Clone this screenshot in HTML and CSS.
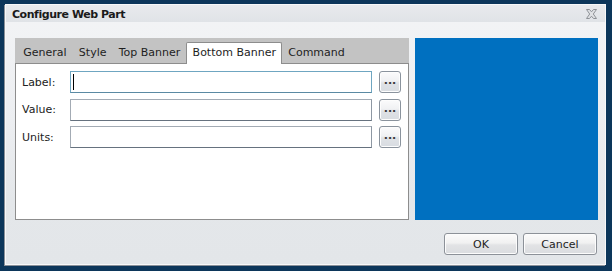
FILE: index.html
```html
<!DOCTYPE html>
<html>
<head>
<meta charset="utf-8">
<link rel="stylesheet" href="styles.css">
</head>
<body>
<div class="dialog">
  <div class="titlebar">
    <span class="title">Configure Web Part</span>
    <svg class="close" width="11" height="10" viewBox="0 0 11 10">
      <polygon points="0.5,0.5 3.5,0.5 5.5,2.8 7.5,0.5 10.5,0.5 7.3,5 10.5,9.5 7.5,9.5 5.5,7.2 3.5,9.5 0.5,9.5 3.7,5" fill="#dfe1e4" stroke="#8e9297" stroke-width="1" stroke-linejoin="round"/>
    </svg>
  </div>
  <div class="main">
    <div class="tabpanel">
      <div class="tabstrip">
        <span class="tab">General</span>
        <span class="tab">Style</span>
        <span class="tab">Top Banner</span>
        <span class="tab active">Bottom Banner</span>
        <span class="tab">Command</span>
      </div>
      <div class="tabbody">
        <div class="row">
          <span class="label">Label:</span>
          <span class="fieldwrap"><input class="field focused" type="text"><span class="caret"></span></span>
          <button class="more">...</button>
        </div>
        <div class="row">
          <span class="label">Value:</span>
          <span class="fieldwrap"><input class="field" type="text"></span>
          <button class="more">...</button>
        </div>
        <div class="row">
          <span class="label">Units:</span>
          <span class="fieldwrap"><input class="field" type="text"></span>
          <button class="more">...</button>
        </div>
      </div>
    </div>
    <div class="preview"></div>
  </div>
  <div class="footer">
    <button class="btn">OK</button>
    <button class="btn">Cancel</button>
  </div>
</div>
</body>
</html>
```
FILE: styles.css
```css
html, body {
  margin: 0;
  padding: 0;
}
body {
  width: 612px;
  height: 271px;
  background: #0c365a;
  padding: 4px 6px 6px 5px;
  box-sizing: border-box;
  font-family: "DejaVu Sans", Verdana, sans-serif;
  font-size: 11px;
  color: #1e1e1e;
}
.dialog {
  width: 601px;
  height: 261px;
  box-sizing: border-box;
  border: 1px solid #f7f8f9;
  box-shadow: -1px 1px 0 #8a9098;
  background: linear-gradient(#f3f4f6 0%, #eceef1 45%, #e4e7ea 75%, #e3e6e9 100%);
  display: flex;
  flex-direction: column;
}
.titlebar {
  height: 17px;
  flex: none;
  background: linear-gradient(#e8eaed, #e0e3e7);
  display: flex;
  align-items: center;
  justify-content: space-between;
  padding: 0 8px 0 6px;
}
.title {
  font-weight: bold;
  font-size: 11px;
  letter-spacing: -0.45px;
  color: #1a1a1a;
  line-height: 17px;
  padding-top: 1px;
}
.close {
  display: block;
  margin-top: 1px;
}
.main {
  height: 198px;
  flex: none;
  box-sizing: border-box;
  padding: 16px 7px 0 9px;
  display: flex;
  gap: 6px;
}
.tabpanel {
  width: 394px;
  height: 182px;
  display: flex;
  flex-direction: column;
}
.tabstrip {
  height: 25px;
  flex: none;
  background: #c3c3c3;
  display: flex;
  align-items: flex-end;
  padding-left: 2px;
  position: relative;
  z-index: 1;
}
.tab {
  height: 20px;
  line-height: 20px;
  padding: 0 5px 0 5.25px;
  border: 1px solid transparent;
  border-bottom: none;
  color: #1e1e1e;
  white-space: nowrap;
}
.tab.active {
  background: #fff;
  border-color: #8d8d8d;
  border-radius: 2px 2px 0 0;
  height: 20px;
  margin-bottom: -1px;
  padding-bottom: 1px;
}
.tabbody {
  flex: 1;
  background: #fff;
  border: 1px solid #8d8d8d;
  padding: 7px 6px 0 6px;
  display: flex;
  flex-direction: column;
  gap: 5.5px;
}
.row {
  display: flex;
  align-items: center;
  height: 22px;
}
.label {
  width: 48px;
  flex: none;
  color: #222;
}
.fieldwrap {
  position: relative;
  display: block;
  width: 302px;
  height: 22px;
  flex: none;
}
.field {
  display: block;
  width: 302px;
  height: 22px;
  box-sizing: border-box;
  margin: 0;
  padding: 0 3px;
  border: 1px solid #a3abb4;
  border-bottom-color: #66727f;
  border-right-color: #8e98a3;
  background: #fff;
  outline: none;
  font-family: inherit;
  font-size: 11px;
}
.field.focused {
  border-color: #6fa6c1;
  border-bottom-color: #5b8aa3;
}
.caret {
  position: absolute;
  left: 3px;
  top: 3px;
  width: 1px;
  height: 16px;
  background: #000;
}
.more {
  margin-left: 7px;
  width: 22px;
  height: 22px;
  box-sizing: border-box;
  padding: 0 0 3px 0;
  border: 1px solid #8a939d;
  border-radius: 3px;
  background: linear-gradient(#fbfbfc 0%, #f0f1f3 45%, #dfe2e6 55%, #d8dce1 100%);
  box-shadow: inset 0 0 0 1px #fdfdfd;
  font-family: inherit;
  font-size: 11px;
  font-weight: bold;
  color: #3a3a3a;
  line-height: 18px;
  text-align: center;
}
.preview {
  width: 183px;
  height: 182px;
  background: #0070c0;
}
.footer {
  flex: 1;
  display: flex;
  justify-content: flex-end;
  align-items: flex-start;
  padding: 13px 8px 0 0;
  gap: 5px;
}
.btn {
  width: 74px;
  height: 22px;
  box-sizing: border-box;
  margin: 0;
  padding: 0;
  border: 1px solid #8c9198;
  border-radius: 3px;
  background: linear-gradient(#fbfbfb 0%, #f1f1f1 45%, #e2e3e5 55%, #dadcdf 100%);
  box-shadow: inset 0 0 0 1px #fcfcfc;
  font-family: inherit;
  font-size: 11px;
  color: #1e1e1e;
}
```
